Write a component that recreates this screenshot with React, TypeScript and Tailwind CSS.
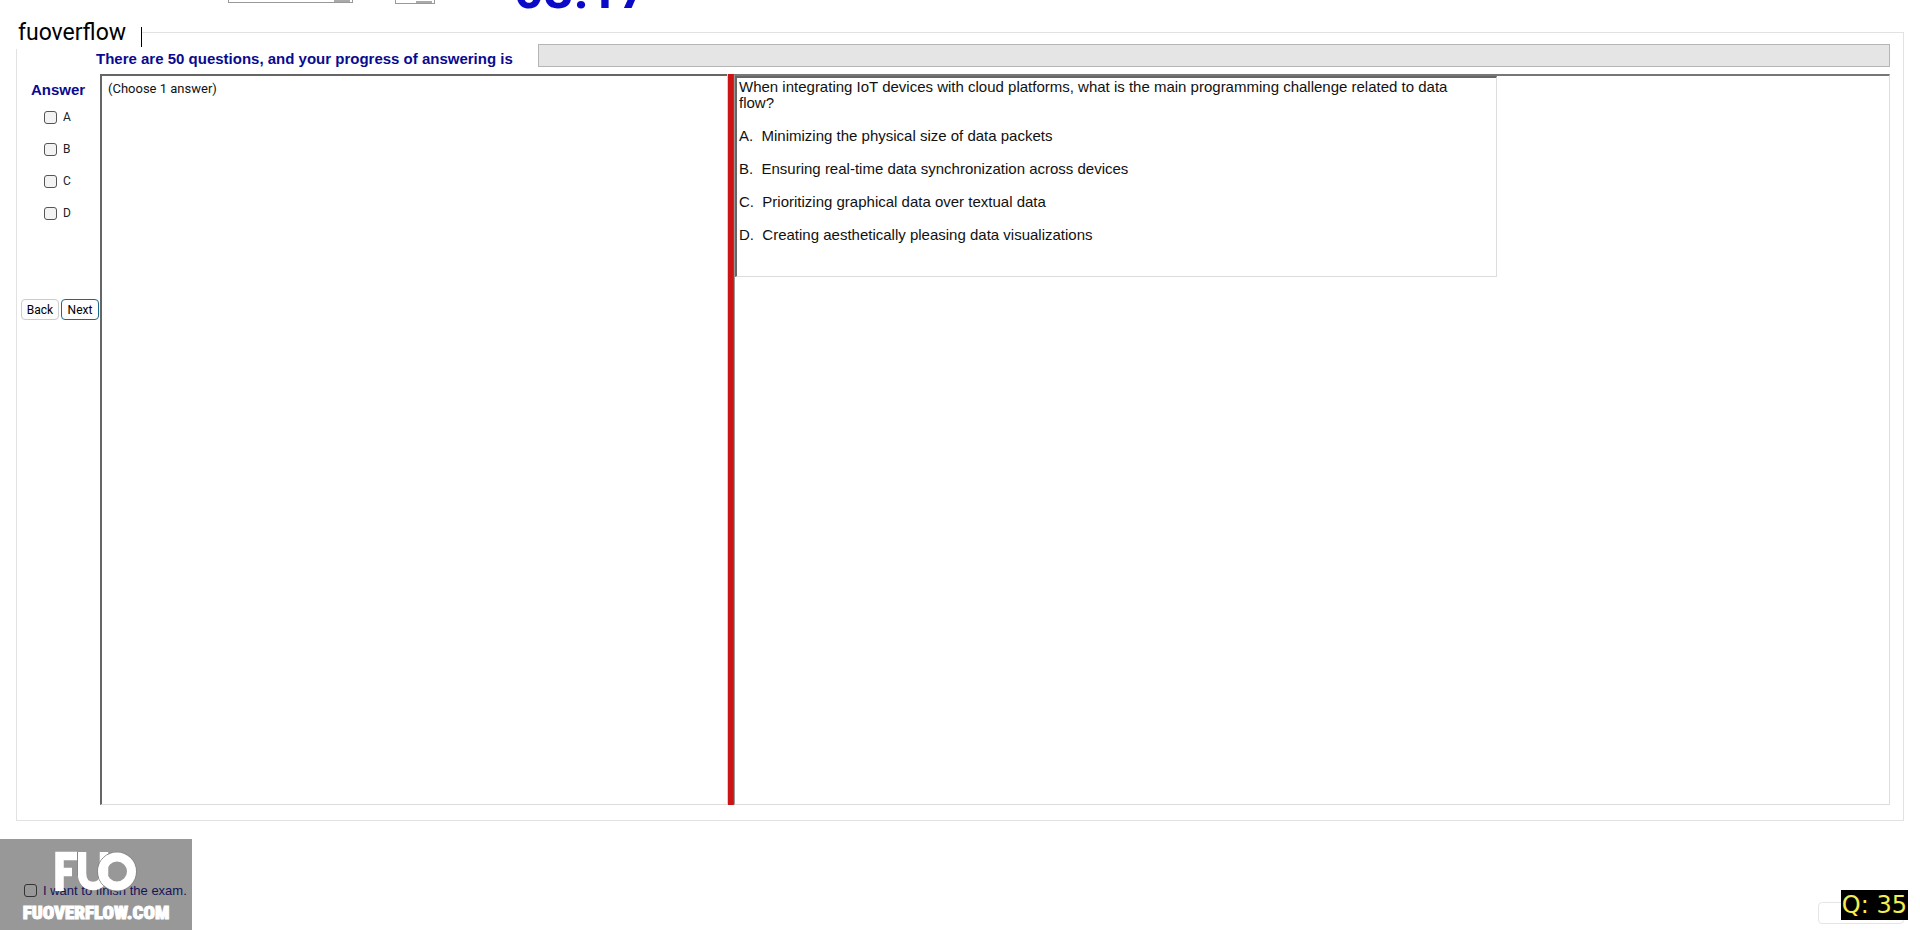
import { useState } from 'react'

const choices = [
  { key: 'A', text: 'Minimizing the physical size of data packets' },
  { key: 'B', text: 'Ensuring real-time data synchronization across devices' },
  { key: 'C', text: 'Prioritizing graphical data over textual data' },
  { key: 'D', text: 'Creating aesthetically pleasing data visualizations' },
]

const checkbox =
  'size-[13px] shrink-0 appearance-none rounded-[3px] border border-[#555] bg-[#f3f3f3] checked:bg-[#0f6fb5]'

function TopBar() {
  return (
    <header className="flex h-3 items-end overflow-hidden pl-[228px]">
      <div className="mb-[9px] flex h-6 w-[125px] shrink-0 items-end justify-end border border-[#999] pr-[2px]">
        <span className="h-[2px] w-4 bg-[#aaa]" />
      </div>
      <div className="mb-2 ml-[42px] flex h-6 w-10 shrink-0 items-end justify-end border border-[#999] pr-[2px]">
        <span className="h-[2px] w-4 bg-[#aaa]" />
      </div>
      <time className="ml-[79px] font-[Roboto,sans-serif] text-[52px] leading-[42px] font-bold text-[#0a0ac8]">
        03:17
      </time>
    </header>
  )
}

function AnswerColumn() {
  const [picked, setPicked] = useState<string[]>([])

  const toggle = (key: string) =>
    setPicked((p) => (p.includes(key) ? p.filter((k) => k !== key) : [...p, key]))

  return (
    <div className="w-[83px] shrink-0 font-[Roboto,sans-serif] text-xs text-[#222]">
      <h2 className="pt-2 pl-[14px] font-['Liberation_Sans',sans-serif] text-[15px] leading-4 font-bold text-[#0a0a90]">
        Answer
      </h2>
      <div className="mt-[11px] flex flex-col gap-4 pl-[27px]">
        {choices.map((c) => (
          <label key={c.key} className="flex h-4 items-center gap-[6px]">
            <input
              type="checkbox"
              className={checkbox}
              checked={picked.includes(c.key)}
              onChange={() => toggle(c.key)}
            />
            {c.key}
          </label>
        ))}
      </div>
      <div className="mt-[78px] flex gap-[2px] pl-1">
        <button
          type="button"
          className="h-[21px] w-[38px] rounded-[4px] border border-[#ccc] bg-[#fdfdfd] text-black"
        >
          Back
        </button>
        <button
          type="button"
          className="h-[21px] w-[38px] rounded-[4px] border border-[#1a6a90] bg-[#fdfdfd] text-black"
        >
          Next
        </button>
      </div>
    </div>
  )
}

function Question() {
  return (
    <div className="flex h-[201px] w-[66%] flex-col border-t-2 border-r border-b border-l-2 border-t-[#666] border-r-[#ddd] border-b-[#ddd] border-l-[#666] pt-px pl-[2px] font-['Liberation_Sans',sans-serif] text-[15px] leading-4 text-[#111]">
      <p className="max-w-[720px]">
        When integrating IoT devices with cloud platforms, what is the main programming challenge
        related to data flow?
      </p>
      <div className="mt-[17px] flex flex-col gap-[17px]">
        {choices.map((c) => (
          <p key={c.key} className="whitespace-pre">
            {`${c.key}.  ${c.text}`}
          </p>
        ))}
      </div>
    </div>
  )
}

function Watermark() {
  return (
    <div className="relative flex h-[91px] w-48 items-center bg-[#989898]">
      <label className="mt-3 flex items-center gap-[6px] pl-6 font-['Liberation_Sans',sans-serif] text-[13px] text-[#14145a]">
        <input
          type="checkbox"
          className="size-[13px] appearance-none rounded-[3px] border border-[#333]"
        />
        I want to finish the exam.
      </label>
      <div className="pointer-events-none absolute inset-0 flex flex-col items-center pt-3">
        <svg width="84" height="43" viewBox="0 0 84 43" fill="none" stroke="#fff" aria-hidden="true">
          <path d="M5.500 40V5H23M5.500 21H18" strokeWidth="8.5" />
          <path d="M28 1v21c0 9 5 13 11 13s11-4 11-12V1" strokeWidth="8.5" />
          <path d="M23.500 1v24" stroke="#888" strokeWidth="1" />
          <circle cx="63" cy="20.500" r="19.500" stroke="#888" strokeWidth="1" />
          <circle cx="63" cy="20.500" r="14.500" strokeWidth="9" />
        </svg>
        <span className="mt-[7px] font-['Roboto_Condensed','Liberation_Sans_Narrow',sans-serif] text-[19px] leading-6 font-black text-white [-webkit-text-stroke:1px_white]">
          FUOVERFLOW.COM
        </span>
      </div>
    </div>
  )
}

export default function App() {
  return (
    <div className="flex min-h-screen flex-col bg-white">
      <TopBar />
      <main className="mt-5 mr-4 ml-4 flex flex-1 flex-col border border-[#e2e2e2] pr-[13px] pb-[15px]">
        <div className="-mt-3 -ml-px flex h-7 w-[126px] items-start justify-between bg-white pl-[2px]">
          <h1 className="font-[Roboto,sans-serif] text-[23px] leading-6 text-black">fuoverflow</h1>
          <span className="mt-[6px] h-5 w-px bg-black" />
        </div>
        <div className="-mt-[5px] flex h-[23px] items-center gap-4 pl-[79px]">
          <span className="w-[426px] shrink-0 pt-[6px] font-['Liberation_Sans',sans-serif] text-[15px] leading-5 font-bold text-[#0a0a90]">
            There are 50 questions, and your progress of answering is
          </span>
          <div className="h-[23px] flex-1 border border-[#b5b5b5] bg-[#e5e5e5]" />
        </div>
        <div className="mt-[7px] flex flex-1">
          <AnswerColumn />
          <section className="w-[627px] shrink-0 border-t-2 border-b border-l-2 border-t-[#666] border-b-[#ddd] border-l-[#666] px-[6px] py-[5px] font-[Roboto,sans-serif] text-[13px] leading-4 text-[#111]">
            (Choose 1 answer)
          </section>
          <div className="w-[7px] shrink-0 border-x border-l-[#f3c6c6] border-r-[#a33] bg-[#cc1414]" />
          <section className="flex-1 border-t-2 border-r border-b border-l border-t-[#777] border-r-[#ddd] border-b-[#ddd] border-l-[#999]">
            <Question />
          </section>
        </div>
      </main>
      <footer className="mt-[18px] flex items-start justify-between pr-4">
        <Watermark />
        <div className="relative mt-[63px]">
          <button
            type="button"
            aria-label="Submit"
            className="block h-[22px] w-[86px] rounded-[4px] border border-[#e5e5e5]"
          />
          <output className="absolute -top-3 -right-1 bg-black px-px font-['DejaVu_Sans',sans-serif] text-2xl leading-[30px] whitespace-pre text-[#f2ee50]">
            Q: 35
          </output>
        </div>
      </footer>
    </div>
  )
}
